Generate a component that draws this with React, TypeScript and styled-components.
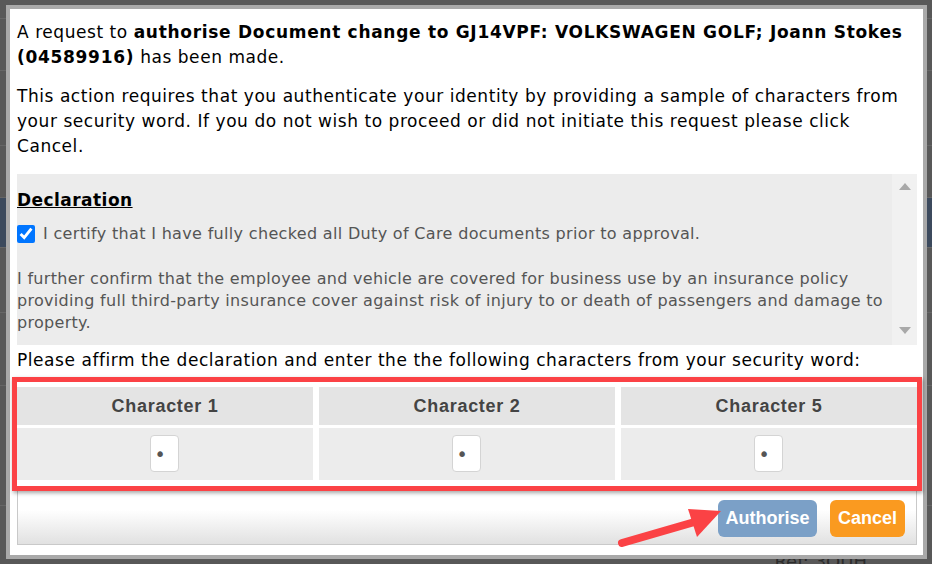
import React from 'react';
import styled, { createGlobalStyle } from 'styled-components';

const GlobalStyle = createGlobalStyle`
  html, body { margin: 0; padding: 0; }
  body { background: #585858; font-family: "DejaVu Sans", Verdana, sans-serif; }
  * { box-sizing: border-box; }
`;

const Page = styled.div`
  position: relative;
  width: 932px;
  height: 564px;
  overflow: hidden;
  background: #585858;
`;

const BgList = styled.div`
  display: flex;
  flex-direction: column;
  padding-top: 18px;
`;

const BgRow = styled.div<{ $h: number; $band?: boolean }>`
  height: ${(p) => p.$h}px;
  border-top: 1px solid #666666;
  background: ${(p) => (p.$band ? '#3c4a5d' : 'transparent')};
  display: flex;
  align-items: flex-start;
  justify-content: flex-end;
  padding-right: 65px;
  font-family: "DejaVu Sans", Verdana, sans-serif;
  font-size: 18px;
  line-height: 22px;
  color: #2c2c2c;
`;

const BgRef = styled.span`
  margin-top: 45px;
`;

const Dialog = styled.div`
  position: absolute;
  left: 6px;
  top: 5px;
  width: 921px;
  height: 554px;
  border: 4px solid #a9a9a9;
  background: #ffffff;
  padding: 11px 6px 0 7px;
  display: flex;
  flex-direction: column;
`;

const Para = styled.p<{ $gap?: number }>`
  margin: ${(p) => p.$gap ?? 0}px 0 0;
  font-size: 17px;
  line-height: 25px;
  letter-spacing: 0.55px;
  color: #000;

  b {
    letter-spacing: 0.7px;
  }
`;

const DeclBox = styled.div`
  margin-top: 15px;
  height: 171px;
  display: flex;
  background: #ececec;
`;

const DeclContent = styled.div`
  flex: 1;
  padding: 14px 0 11px 0;
  color: #555555;
`;

const DeclTitle = styled.div`
  font-size: 17px;
  line-height: 25px;
  font-weight: bold;
  letter-spacing: 0.45px;
  text-decoration: underline;
  color: #000;
`;

const CheckRow = styled.label`
  margin-top: 10px;
  display: flex;
  align-items: center;
  gap: 8px;
  font-size: 16px;
  line-height: 22px;
  letter-spacing: 0.33px;
`;

const Checkbox = styled.input`
  width: 18px;
  height: 18px;
  margin: 0;
  accent-color: #0075ff;
`;

const DeclPara = styled.p`
  margin: 23px 0 0;
  font-size: 16px;
  line-height: 22px;
  letter-spacing: 0.3px;
`;

const ScrollTrack = styled.div`
  width: 25px;
  background: #f1f1f1;
  display: flex;
  flex-direction: column;
  justify-content: space-between;
  align-items: center;
  padding: 9px 0 11px;
`;

const Arrow = styled.div<{ $dir: 'up' | 'down' }>`
  width: 0;
  height: 0;
  border-left: 6px solid transparent;
  border-right: 6px solid transparent;
  ${(p) => (p.$dir === 'up' ? 'border-bottom: 7px solid #a9a9a9;' : 'border-top: 7px solid #a9a9a9;')}
`;

const CharWrap = styled.div`
  margin: 4px -5px 0;
  border: 5px solid #fb4245;
  padding: 5px 0 6px;
  box-shadow: 1px 2px 4px rgba(0, 0, 0, 0.35);
  position: relative;
  z-index: 1;
  background: #fff;
`;

const CharGrid = styled.div`
  display: grid;
  grid-template-columns: repeat(3, 1fr);
  column-gap: 6px;
  row-gap: 3px;
`;

const HeadCell = styled.div`
  height: 38px;
  background: #e4e4e4;
  display: flex;
  align-items: center;
  justify-content: center;
  font-family: "Liberation Sans", Arial, sans-serif;
  font-weight: bold;
  font-size: 18px;
  letter-spacing: 0.7px;
  color: #444444;
`;

const BodyCell = styled.div`
  height: 52px;
  background: #ececec;
  display: flex;
  align-items: center;
  justify-content: center;
`;

const CharInput = styled.input`
  width: 29px;
  height: 37px;
  margin: 0 0 1px -2px;
  padding: 0 0 0 4px;
  border: 1px solid #d4d4d4;
  border-radius: 4px;
  background: #fff;
  font-family: "DejaVu Sans", sans-serif;
  font-size: 19px;
  color: #555;
  outline: none;
`;

const Footer = styled.div`
  height: 54px;
  border: 1px solid #c9c9c9;
  border-top: none;
  background: linear-gradient(to bottom, #ffffff 35%, #e1e1e1 100%);
  display: flex;
  justify-content: flex-end;
  align-items: flex-start;
  gap: 13px;
  padding: 9px 11px 0 0;
`;

const Button = styled.button<{ $variant: 'primary' | 'cancel'; $w: number }>`
  width: ${(p) => p.$w}px;
  height: 37px;
  border: none;
  border-radius: 6px;
  padding: 0;
  background: ${(p) => (p.$variant === 'primary' ? '#7ba0c7' : '#fa9a20')};
  color: #ffffff;
  font-family: "Liberation Sans", Arial, sans-serif;
  font-weight: bold;
  font-size: 18px;
`;

const Annotation = styled.svg`
  position: absolute;
  left: 0;
  top: 0;
  pointer-events: none;
  z-index: 5;
`;

export default function App() {
  const chars = [1, 2, 5];
  return (
    <>
      <GlobalStyle />
      <Page>
        <BgList>
          <BgRow $h={52} />
          <BgRow $h={75} />
          <BgRow $h={52} />
          <BgRow $h={50} $band />
          <BgRow $h={65} />
          <BgRow $h={73} />
          <BgRow $h={120} />
          <BgRow $h={59}>
            <BgRef>Ref: 3QUH</BgRef>
          </BgRow>
        </BgList>
        <Dialog>
          <Para>
            A request to <b>authorise Document change to GJ14VPF: VOLKSWAGEN GOLF; Joann Stokes (04589916)</b> has been
            made.
          </Para>
          <Para $gap={14}>
            This action requires that you authenticate your identity by providing a sample of characters from your
            security word. If you do not wish to proceed or did not initiate this request please click Cancel.
          </Para>
          <DeclBox>
            <DeclContent>
              <DeclTitle>Declaration</DeclTitle>
              <CheckRow>
                <Checkbox type="checkbox" defaultChecked />
                I certify that I have fully checked all Duty of Care documents prior to approval.
              </CheckRow>
              <DeclPara>
                I further confirm that the employee and vehicle are covered for business use by an insurance policy
                providing full third-party insurance cover against risk of injury to or death of passengers and damage
                to property.
              </DeclPara>
            </DeclContent>
            <ScrollTrack>
              <Arrow $dir="up" />
              <Arrow $dir="down" />
            </ScrollTrack>
          </DeclBox>
          <Para $gap={3}>
            Please affirm the declaration and enter the the following characters from your security word:
          </Para>
          <CharWrap>
            <CharGrid>
              {chars.map((c) => (
                <HeadCell key={`h${c}`}>Character {c}</HeadCell>
              ))}
              {chars.map((c) => (
                <BodyCell key={`b${c}`}>
                  <CharInput type="password" defaultValue="x" maxLength={1} />
                </BodyCell>
              ))}
            </CharGrid>
          </CharWrap>
          <Footer>
            <Button $variant="primary" $w={99}>
              Authorise
            </Button>
            <Button $variant="cancel" $w={75}>
              Cancel
            </Button>
          </Footer>
        </Dialog>
        <Annotation width={932} height={564} viewBox="0 0 932 564">
          <line x1={622} y1={543} x2={698} y2={521} stroke="#fb4245" strokeWidth={8} strokeLinecap="round" />
          <polygon points="721,511 688,509 697,537" fill="#fb4245" />
        </Annotation>
      </Page>
    </>
  );
}
